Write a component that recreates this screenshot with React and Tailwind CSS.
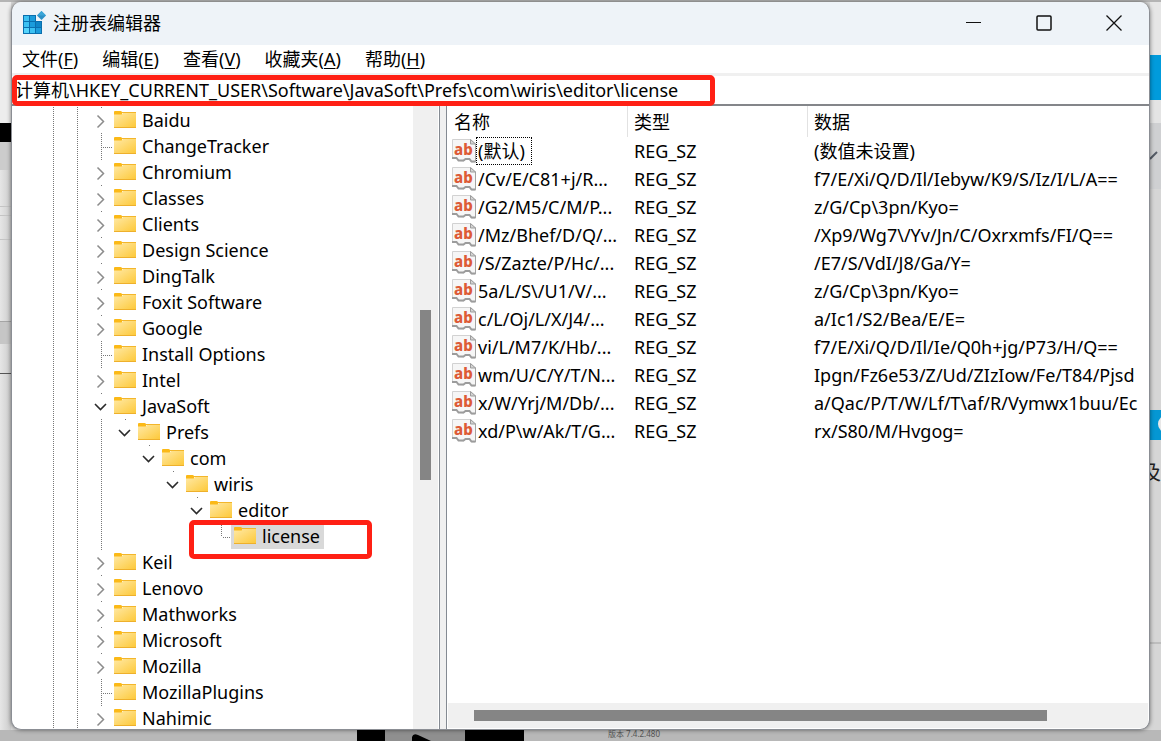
import { useState } from "react";
import clsx from "clsx";

const TREE = [
  { name: "Baidu", depth: 0, state: "closed" },
  { name: "ChangeTracker", depth: 0, state: "leaf" },
  { name: "Chromium", depth: 0, state: "closed" },
  { name: "Classes", depth: 0, state: "closed" },
  { name: "Clients", depth: 0, state: "closed" },
  { name: "Design Science", depth: 0, state: "closed" },
  { name: "DingTalk", depth: 0, state: "closed" },
  { name: "Foxit Software", depth: 0, state: "closed" },
  { name: "Google", depth: 0, state: "closed" },
  { name: "Install Options", depth: 0, state: "leaf" },
  { name: "Intel", depth: 0, state: "closed" },
  { name: "JavaSoft", depth: 0, state: "open" },
  { name: "Prefs", depth: 1, state: "open" },
  { name: "com", depth: 2, state: "open" },
  { name: "wiris", depth: 3, state: "open" },
  { name: "editor", depth: 4, state: "open" },
  { name: "license", depth: 5, state: "last", marked: true },
  { name: "Keil", depth: 0, state: "closed" },
  { name: "Lenovo", depth: 0, state: "closed" },
  { name: "Mathworks", depth: 0, state: "closed" },
  { name: "Microsoft", depth: 0, state: "closed" },
  { name: "Mozilla", depth: 0, state: "closed" },
  { name: "MozillaPlugins", depth: 0, state: "leaf" },
  { name: "Nahimic", depth: 0, state: "closed" },
];

const VALUES = [
  ["(默认)", "(数值未设置)"],
  ["/Cv/E/C81+j/R...", "f7/E/Xi/Q/D/Il/Iebyw/K9/S/Iz/I/L/A=="],
  ["/G2/M5/C/M/P...", "z/G/Cp\\3pn/Kyo="],
  ["/Mz/Bhef/D/Q/...", "/Xp9/Wg7\\/Yv/Jn/C/Oxrxmfs/FI/Q=="],
  ["/S/Zazte/P/Hc/...", "/E7/S/VdI/J8/Ga/Y="],
  ["5a/L/S\\/U1/V/...", "z/G/Cp\\3pn/Kyo="],
  ["c/L/Oj/L/X/J4/...", "a/Ic1/S2/Bea/E/E="],
  ["vi/L/M7/K/Hb/...", "f7/E/Xi/Q/D/Il/Ie/Q0h+jg/P73/H/Q=="],
  ["wm/U/C/Y/T/N...", "Ipgn/Fz6e53/Z/Ud/ZIzIow/Fe/T84/Pjsd"],
  ["x/W/Yrj/M/Db/...", "a/Qac/P/T/W/Lf/T\\af/R/Vymwx1buu/Ec"],
  ["xd/P\\w/Ak/T/G...", "rx/S80/M/Hvgog="],
];

const MENUS = [
  ["文件", "F"],
  ["编辑", "E"],
  ["查看", "V"],
  ["收藏夹", "A"],
  ["帮助", "H"],
];

function RegeditIcon() {
  return (
    <svg width="24" height="24" viewBox="0 0 24 24" aria-hidden="true">
      <rect x="1" y="4" width="19" height="19" fill="#0a6fae" />
      <g fill="#3cc1f2">
        <rect x="2" y="5" width="5" height="5" />
        <rect x="8" y="5" width="5" height="5" fill="#1b9cdc" />
        <rect x="2" y="11" width="5" height="5" />
        <rect x="8" y="11" width="5" height="5" fill="#1b9cdc" />
        <rect x="14" y="11" width="5" height="5" fill="#0f86c8" />
        <rect x="2" y="17" width="5" height="5" fill="#55d4fb" />
        <rect x="8" y="17" width="5" height="5" />
        <rect x="14" y="17" width="5" height="5" fill="#1b9cdc" />
      </g>
      <path d="M14 3h7v7h-7z" fill="#eef3f8" />
      <path d="M19.500 0l4.500 4.500-4.500 4.500L15 4.500z" fill="#2a8fc6" />
      <path d="M19.500 0L24 4.500h-9z" fill="#3aa5d8" />
    </svg>
  );
}

function FolderIcon() {
  return (
    <svg width="22" height="18" viewBox="0 0 22 18" className="shrink-0" aria-hidden="true">
      <defs>
        <linearGradient id="folder" x1="0" y1="0" x2="1" y2="1">
          <stop offset="0" stopColor="#ffe9a6" />
          <stop offset="1" stopColor="#fdc93a" />
        </linearGradient>
      </defs>
      <path d="M0 1q0-1 1-1h5.500q1 0 1.500 1v3H0z" fill="#fbb917" />
      <path d="M0 3.500h7.500l1.500-1.500H22V16H0z" fill="url(#folder)" />
      <path d="M8 1h14v1H8z" fill="#f3b62b" />
      <path d="M0 16h22v1H0z" fill="#eeb02c" />
    </svg>
  );
}

function StringIcon() {
  return (
    <svg
      width="24"
      height="24"
      viewBox="0 0 24 24"
      className="shrink-0 overflow-visible"
      aria-hidden="true"
    >
      <path
        d="M.500.500h18l5 4.500v18h-4l-2-2.500h-4l-2 1.500-4.500-.500-2-2H.500z"
        fill="#f6f6f6"
        stroke="#d2d2d2"
      />
      <path d="M0 19h4.500l2 2.500h5l2-1.500h4l2 2.500h4" fill="none" stroke="#9c9c9c" strokeWidth="2" />
      <path d="M23.500 4.500V23" stroke="#a3a3a3" />
      <path d="M18.500.500v4.500h5z" fill="#d4d4d4" stroke="#9c9c9c" />
      <text
        x="2"
        y="16"
        fill="#dd5b37"
        fontSize="15"
        fontWeight="800"
        fontFamily="Noto Sans, sans-serif"
      >
        ab
      </text>
    </svg>
  );
}

// One 24px indent column of the tree: "line", "tee", "elbow" or empty.
function Guide({ kind }) {
  return (
    <svg
      width="24"
      height="26"
      viewBox="0 0 24 26"
      shapeRendering="crispEdges"
      stroke="#777"
      strokeDasharray="1 1"
      className="shrink-0"
      aria-hidden="true"
    >
      {kind === "line" && <path d="M12.500 0V26" />}
      {kind === "tee" && <path d="M12.500 0V26M14 14.500H24" />}
      {kind === "elbow" && <path d="M12.500 0V14M14 14.500H24" />}
    </svg>
  );
}

function Expander({ open, name }) {
  return (
    <button aria-label={name} aria-expanded={open} className="h-[26px] w-6 shrink-0">
      <svg width="24" height="26" viewBox="0 0 24 26" fill="none" aria-hidden="true">
        <path d="M12 0h1v1h-1z" fill="#777" />
        {open ? (
          <path d="M6 11l5.500 5.500L17 11" stroke="#2b2b2b" strokeWidth="1.600" />
        ) : (
          <path d="M8.500 8.500l6 6-6 6" stroke="#8c8c8c" strokeWidth="1.500" />
        )}
      </svg>
    </button>
  );
}

function TreeRow({ node, selected, onSelect }) {
  const { name, depth, state, marked } = node;
  return (
    <li role="treeitem" aria-selected={selected} className="flex h-[26px] shrink-0">
      <Guide kind="line" />
      <Guide kind="line" />
      {Array.from({ length: depth }, (_, i) => (
        <Guide key={i} kind={i === 0 ? "line" : "none"} />
      ))}
      {state === "leaf" && <Guide kind="tee" />}
      {state === "last" && <Guide kind="elbow" />}
      {(state === "open" || state === "closed") && (
        <Expander open={state === "open"} name={name} />
      )}
      <div className="relative -ml-0.5">
        <button
          onClick={onSelect}
          className={clsx(
            "flex h-[26px] items-center gap-1.5 pr-1 pl-[3px]",
            selected && "bg-[#d9d9d9]"
          )}
        >
          <FolderIcon />
          {name}
        </button>
        {marked && (
          <span className="pointer-events-none absolute -top-[3px] -left-[42px] h-[39px] w-[183px] rounded-[5px] border-[5px] border-[#ff2014]" />
        )}
      </div>
    </li>
  );
}

function TitleBar() {
  return (
    <header className="flex h-[43px] shrink-0 items-center bg-[#eef3f8] pb-0.5 pl-2.5">
      <RegeditIcon />
      <h1 className="flex-1 pl-[7px]">注册表编辑器</h1>
      <button aria-label="最小化" className="flex h-full w-[70px] items-center justify-center">
        <svg width="16" height="16" viewBox="0 0 16 16" stroke="#111" fill="none">
          <path d="M0 7.500h15" />
        </svg>
      </button>
      <button aria-label="最大化" className="flex h-full w-[70px] items-center justify-center">
        <svg width="16" height="16" viewBox="0 0 16 16" stroke="#111" fill="none">
          <rect x="1" y="1" width="14" height="14" rx="1" strokeWidth="1.500" />
        </svg>
      </button>
      <button aria-label="关闭" className="flex h-full w-[70px] items-center justify-center">
        <svg width="16" height="16" viewBox="0 0 16 16" stroke="#111" fill="none">
          <path d="M.500.500l15 15M15.500.500l-15 15" strokeWidth="1.300" />
        </svg>
      </button>
    </header>
  );
}

export default function App() {
  const [selected, setSelected] = useState("license");
  const [path, setPath] = useState(
    "计算机\\HKEY_CURRENT_USER\\Software\\JavaSoft\\Prefs\\com\\wiris\\editor\\license"
  );

  return (
    <div className="flex h-screen flex-col overflow-hidden bg-[#b9b9b9] font-['Noto_Sans','Noto_Sans_CJK_SC',sans-serif] text-lg leading-6 text-black">
      <div className="h-0.5 shrink-0 bg-[#b4b4b4]" />

      <div className="flex min-h-0 flex-1 bg-[#d6d6d6]">
        <aside className="flex w-[11px] shrink-0 flex-col bg-linear-to-r from-[#e6e6e6] to-[#cccccc]">
          <div className="h-[121px] bg-[#ededed]" />
          <div className="h-[19px] bg-black" />
          <div className="h-7 bg-[#cccccc]" />
          <div className="h-[37px] border-b border-[#c4c4c4]" />
          <div className="h-[9px] border-b border-[#c4c4c4]" />
          <div className="h-6 border-b border-[#c4c4c4]" />
          <div className="h-[82px] border-b border-[#a5a5a5]" />
          <div className="h-[22px] bg-[#c6c6c6]" />
          <div className="h-[30px] border-b border-[#555]" />
        </aside>

        <main className="relative flex min-w-0 flex-1 flex-col overflow-hidden rounded-[10px] border border-t-0 border-[#8b8e94] bg-white shadow-[0_0_4px_rgba(0,0,0,0.5)]">
          <TitleBar />

          <nav className="flex h-7 shrink-0 items-center gap-6 pl-2.5">
            {MENUS.map(([label, key]) => (
              <button key={key}>
                {label}(<u className="underline-offset-2">{key}</u>)
              </button>
            ))}
          </nav>

          <div className="relative h-[33px] shrink-0 border-t-[3px] border-b-2 border-t-[#f0f0f0] border-b-[#84868a]">
            <input
              aria-label="地址"
              value={path}
              onChange={(e) => setPath(e.target.value)}
              className="block h-[26px] w-full pl-[3px] outline-none"
            />
            <span className="pointer-events-none absolute -top-px left-0 h-[31px] w-[703px] rounded-[5px] border-[5px] border-[#ff2014]" />
          </div>

          <div className="flex min-h-0 flex-1">
            <section className="flex w-[428px] shrink-0 border-r border-[#848a92]">
              <ul
                role="tree"
                aria-label="注册表项"
                className="flex min-w-0 flex-1 flex-col overflow-hidden pt-px pl-[29px]"
              >
                {TREE.map((node) => (
                  <TreeRow
                    key={node.name}
                    node={node}
                    selected={selected === node.name}
                    onSelect={() => setSelected(node.name)}
                  />
                ))}
              </ul>
              <div className="mr-px flex w-[25px] flex-col bg-[#f0f0f0] px-[7px]">
                <div className="flex-[204]" />
                <div className="flex-[170] bg-[#858585]" />
                <div className="flex-[249]" />
              </div>
            </section>

            <div className="w-1.5 shrink-0 bg-[#f0f0f0]" />

            <section className="flex min-w-0 flex-1 flex-col border-l border-[#848a92] px-px">
              <div className="min-h-0 flex-1 overflow-hidden">
                <table className="w-full table-fixed border-separate border-spacing-0 whitespace-nowrap">
                  <colgroup>
                    <col className="w-[180px]" />
                    <col className="w-[180px]" />
                    <col />
                  </colgroup>
                  <thead>
                    <tr className="h-[31px] text-left">
                      <th className="border-r border-[#e2e2e2] p-0 pl-1.5 font-normal">名称</th>
                      <th className="border-r border-[#e2e2e2] p-0 pl-1.5 font-normal">类型</th>
                      <th className="p-0 pl-1.5 font-normal">数据</th>
                    </tr>
                  </thead>
                  <tbody>
                    {VALUES.map(([name, data], i) => (
                      <tr key={name} className="h-7">
                        <td className="p-0 pl-1">
                          <div className="flex items-center">
                            <StringIcon />
                            <span
                              className={clsx(
                                "flex h-7 items-center border border-dotted pr-1.5 pl-px",
                                i === 0 ? "border-black" : "border-transparent"
                              )}
                            >
                              {name}
                            </span>
                          </div>
                        </td>
                        <td className="p-0 pl-1.5">REG_SZ</td>
                        <td className="overflow-hidden p-0 pl-1.5">{data}</td>
                      </tr>
                    ))}
                  </tbody>
                </table>
              </div>
              <div className="mb-px flex h-[25px] shrink-0 bg-[#f0f0f0] py-[7px]">
                <div className="flex-[26]" />
                <div className="flex-[573] bg-[#858585]" />
                <div className="flex-[101]" />
              </div>
            </section>
          </div>
        </main>

        <aside className="flex w-[11px] shrink-0 flex-col overflow-hidden">
          <div className="h-[53px] shrink-0 bg-[#e6e6e6]" />
          <div className="h-[45px] shrink-0 bg-[#009bdc]" />
          <div className="h-[23px] shrink-0 bg-[#e4e4e4]" />
          <div className="flex h-[66px] shrink-0 items-center bg-[#cfd0d2]">
            <svg width="10" height="10" viewBox="0 0 10 10" stroke="#555b66" strokeWidth="2">
              <path d="M0 8l7-7" />
            </svg>
          </div>
          <div className="h-[221px] shrink-0" />
          <div className="h-[30px] shrink-0 bg-[#0597d3]">
            <svg width="11" height="30" viewBox="0 0 11 30" fill="#e8e8e8">
              <circle cx="17" cy="14" r="9" />
            </svg>
          </div>
          <div className="flex h-[66px] shrink-0 items-center justify-end text-xl text-[#222]">及</div>
          <div className="h-[138px] shrink-0 border-b-2 border-[#bdbdbd]" />
        </aside>
      </div>

      <footer className="flex h-[11px] shrink-0 overflow-hidden bg-[#b8b8b8] pl-[357px] text-[8px] leading-[8px] text-[#555]">
        <div className="w-7 bg-black" />
        <div className="w-20 bg-[#8f8f8f]">
          <svg width="80" height="11" viewBox="0 0 80 11">
            <path d="M27 11V7q1-4 6-2l13 6z" />
          </svg>
        </div>
        <div className="w-[59px] bg-black" />
        <span className="pl-[84px]">版本 7.4.2.480</span>
      </footer>
    </div>
  );
}
